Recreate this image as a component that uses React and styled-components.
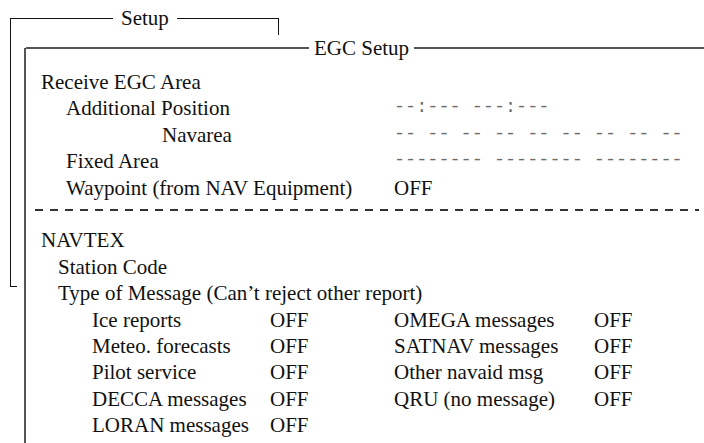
import React from 'react'
import styled, { createGlobalStyle } from 'styled-components'

const GlobalStyle = createGlobalStyle`
  html, body {
    margin: 0;
    padding: 0;
    background: #fff;
    overflow: hidden;
  }
`

const serif = `"Liberation Serif", "Times New Roman", "DejaVu Serif", serif`

const Desktop = styled.div`
  position: relative;
  width: 704px;
  height: 443px;
  overflow: hidden;
  background: #fff;
  font-family: ${serif};
  color: #111;
`

// a menu window stacked on the desktop, framed only on its left and top
const Window = styled.section`
  position: absolute;
  left: ${p => p.$left}px;
  top: ${p => p.$top}px;
  width: ${p => (p.$width ? `${p.$width}px` : 'auto')};
  right: ${p => (p.$width ? 'auto' : '0')};
  height: ${p => (p.$height ? `${p.$height}px` : 'auto')};
  bottom: ${p => (p.$height ? 'auto' : '0')};
  border-left: ${p => p.$weight}px solid ${p => p.$color};

  &::after {
    content: '';
    display: ${p => (p.$tick ? 'block' : 'none')};
    position: absolute;
    left: 0;
    bottom: 0;
    width: 6px;
    border-bottom: 1px solid ${p => p.$color};
  }
`

const TitleRow = styled.div`
  display: flex;
  align-items: center;
  height: ${p => p.$h}px;
  margin-top: -${p => p.$lift}px;
`

const Rule = styled.div`
  height: ${p => p.$weight}px;
  background: ${p => p.$color};
  width: ${p => (p.$width ? `${p.$width}px` : 'auto')};
  flex: ${p => (p.$width ? 'none' : '1')};
`

const StubRule = styled.div`
  align-self: flex-start;
  margin-top: 10px;
  width: ${p => p.$width}px;
  height: 17px;
  border-top: 1px solid #111;
  border-right: 1px solid #111;
  box-sizing: border-box;
`

const Title = styled.span`
  font-family: ${serif};
  font-size: 21px;
  line-height: 1;
  padding: 0 ${p => p.$gap}px;
  white-space: nowrap;
`

const Body = styled.div`
  padding: 10px 0 0 15px;
  font-family: ${serif};
  font-size: 21px;
  line-height: 26.4px;
`

const Row = styled.div`
  display: grid;
  grid-template-columns: 353px 1fr;
  height: 26.4px;
  white-space: nowrap;
`

const Label = styled.div`
  height: 26.4px;
  padding-left: ${p => p.$indent || 0}px;
  white-space: nowrap;
`

const Value = styled.div`
  font-family: ${p => (p.$blank ? `"Liberation Mono", "Courier New", monospace` : serif)};
  font-size: ${p => (p.$blank ? '18.5px' : '21px')};
  color: ${p => (p.$blank ? '#6b6b6b' : '#111')};
  line-height: 26.4px;
  white-space: pre;
`

const Divider = styled.div`
  height: 2px;
  margin: 8px 5px 16.4px -6px;
  background: repeating-linear-gradient(to right, #333 0 8px, transparent 8px 15px);
`

const MessageGrid = styled.div`
  display: grid;
  grid-template-columns: 178px 124px 200px auto;
  grid-auto-rows: 26.4px;
  padding-left: 51px;
  white-space: nowrap;
`

const egcRows = [
  { label: 'Receive EGC Area', indent: 0 },
  { label: 'Additional Position', indent: 25, blank: '--:--- ---:---' },
  { label: 'Navarea', indent: 121, blank: '-- -- -- -- -- -- -- -- --' },
  { label: 'Fixed Area', indent: 25, blank: '-------- -------- --------' },
  { label: 'Waypoint (from NAV Equipment)', indent: 25, value: 'OFF' },
]

const messages = [
  ['Ice reports', 'OFF', 'OMEGA messages', 'OFF'],
  ['Meteo. forecasts', 'OFF', 'SATNAV messages', 'OFF'],
  ['Pilot service', 'OFF', 'Other navaid msg', 'OFF'],
  ['DECCA messages', 'OFF', 'QRU (no message)', 'OFF'],
  ['LORAN messages', 'OFF', '', ''],
]

export default function App() {
  return (
    <Desktop>
      <GlobalStyle />

      <Window $left={10} $top={18} $width={268} $height={269} $weight={1} $color="#111" $tick>
        <TitleRow $h={21} $lift={10}>
          <Rule $width={102} $weight={1} $color="#111" />
          <Title $gap={8}>Setup</Title>
          <StubRule $width={106} />
        </TitleRow>
      </Window>

      <Window $left={24} $top={48} $weight={2} $color="#555">
        <TitleRow $h={22} $lift={11}>
          <Rule $width={283} $weight={2} $color="#555" />
          <Title $gap={5}>EGC Setup</Title>
          <Rule $weight={2} $color="#555" />
        </TitleRow>

        <Body>
          {egcRows.map(r => (
            <Row key={r.label}>
              <Label $indent={r.indent}>{r.label}</Label>
              <Value $blank={!!r.blank}>{r.blank || r.value}</Value>
            </Row>
          ))}

          <Divider />

          <Label>NAVTEX</Label>
          <Label $indent={17}>Station Code</Label>
          <Label $indent={17}>Type of Message (Can’t reject other report)</Label>
          <MessageGrid>
            {messages.flat().map((cell, i) => (
              <div key={i}>{cell}</div>
            ))}
          </MessageGrid>
        </Body>
      </Window>
    </Desktop>
  )
}
